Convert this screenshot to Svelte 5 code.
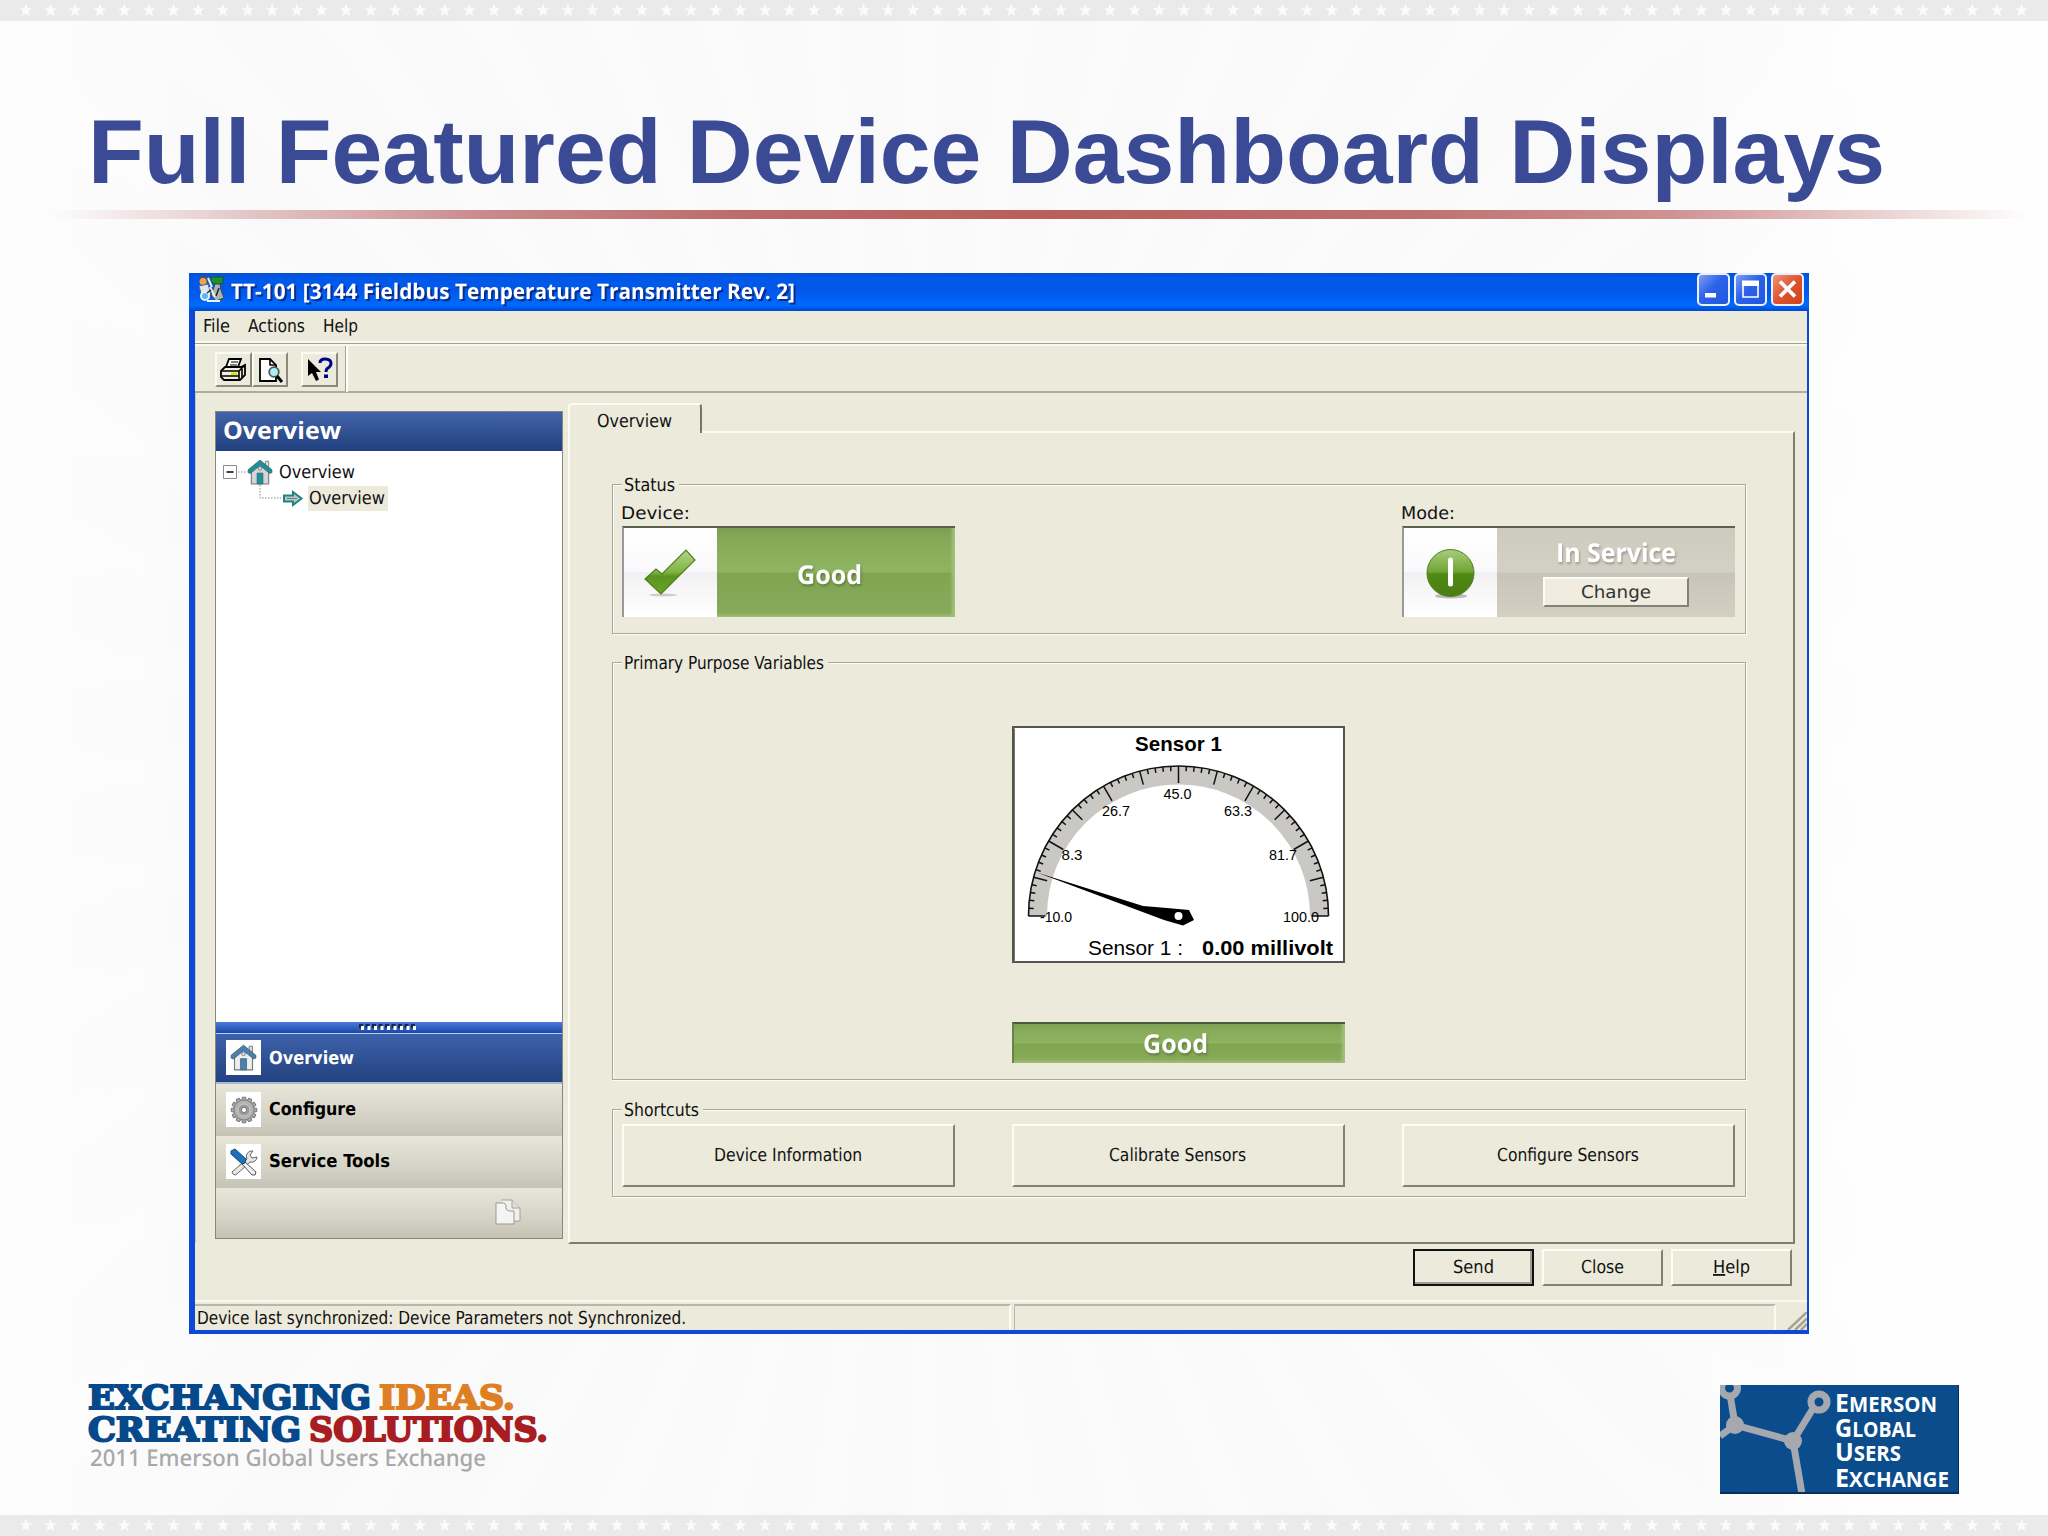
<script lang="ts">
  type Face = { size: number; cls: string };

  const faces: Record<string, Face> = {
    ui: { size: 18, cls: "ui" },
    bold: { size: 18, cls: "ui strong" },
    wide: { size: 17.5, cls: "wide" },
    caption: { size: 21.5, cls: "caption" },
    head: { size: 24, cls: "head" },
    state: { size: 26, cls: "state" },
    slide: { size: 91, cls: "slide-title" },
    slab: { size: 33, cls: "slab" },
    event: { size: 23, cls: "event" },
  };

  const stars = Array.from({ length: 82 }, (_, i) => 25.8 + i * 24.64);

  const menu = [
    { text: "File", width: 27 },
    { text: "Actions", width: 57 },
    { text: "Help", width: 35 },
  ];

  const shortcuts = [
    { text: "Device Information", width: 148 },
    { text: "Calibrate Sensors", width: 137 },
    { text: "Configure Sensors", width: 142 },
  ];

  // gauge geometry
  const cx = 166.5;
  const cy = 190;
  const outer = 150;

  const ticks = Array.from({ length: 61 }, (_, i) => {
    const a = Math.PI - (i * Math.PI) / 60;
    const len = i % 10 === 0 ? 17 : i % 5 === 0 ? 14 : 5;
    return {
      x1: cx + outer * Math.cos(a),
      y1: cy - outer * Math.sin(a),
      x2: cx + (outer - len) * Math.cos(a),
      y2: cy - (outer - len) * Math.sin(a),
    };
  });

  const scale = [
    { text: "-10.0", x: 28, y: 195.5, width: 32 },
    { text: "8.3", x: 49.5, y: 134, width: 21 },
    { text: "26.7", x: 90, y: 89.5, width: 28 },
    { text: "45.0", x: 151.5, y: 73, width: 28 },
    { text: "63.3", x: 212, y: 89.5, width: 28 },
    { text: "81.7", x: 257, y: 134, width: 28 },
    { text: "100.0", x: 271, y: 195.5, width: 36 },
  ];

  const teeth = Array.from({ length: 12 }, (_, i) => i * 30);
</script>

{#snippet label(text: string, width: number, face = "ui")}
  <svg class="label {faces[face].cls}" {width} height={Math.round(faces[face].size * 1.34)}>
    <text x="0" y={faces[face].size} font-size={faces[face].size} textLength={width} lengthAdjust="spacingAndGlyphs">{text}</text>
  </svg>
{/snippet}

{#snippet starBand()}
  <svg class="band" width="2048" height="21" viewBox="0 0 2048 21">
    {#each stars as x}
      <path transform="translate({x} 10.5)" d="M0-7 1.7-2.2 6.4-2.1 2.6 .8 4 5.8 0 3-4 5.8-2.6 .8-6.4-2.1-1.7-2.2Z" fill="#fbfbfb" />
    {/each}
  </svg>
{/snippet}

{#snippet house(size: number, roof: string, wall: string)}
  <svg width={size} height={size} viewBox="0 0 24 24">
    <path d="M17 2h3v7h-3z" fill="#ddd" stroke="#777" stroke-width=".8" />
    <path d="M4 11 12 4l8 7v12H4z" fill={wall} stroke="#777" />
    <path d="M1 12.5V10L12 1l11 9v2.5l-2 .8L12 6 3 13.300z" fill={roof} stroke="#35606e" stroke-width=".7" />
    <path d="M9.300 13h5.400v10H9.300z" fill={roof} stroke="#35606e" stroke-width=".6" />
    <circle cx="12" cy="8.700" r="1.600" fill="#dfe9f2" stroke="#456" stroke-width=".6" />
  </svg>
{/snippet}

<div class="slide">
  {@render starBand()}
  <header>
    {@render label("Full Featured Device Dashboard Displays", 1797, "slide")}
  </header>
  <div class="rule"></div>

  <main class="window">
    <div class="titlebar">
      <svg width="27" height="27" viewBox="0 0 27 27">
        <path d="M2 1h7v7H2z" fill="#7a4a20" /><circle cx="5" cy="5.500" r="3.500" fill="#f2a24c" />
        <path d="M1 10 10 8 13 18 4 21z" fill="#d9e6ee" stroke="#4a6b7c" />
        <path d="M13 1h12v6l-6 2-6-3z" fill="#1f8f30" stroke="#0e5a20" />
        <path d="M17 8h5l1 6 3 8-8 3-5-6z" fill="#a9b5b2" stroke="#39454a" />
        <circle cx="7" cy="20" r="4" fill="#58b8f0" stroke="#e8f3f8" stroke-width="2" />
        <path d="M9 25h13M12 11l5 10M10 2l4 9" stroke="#eef2f3" stroke-width="2" />
        <path d="m21 12-3 8M13 14l-4 3" stroke="#222" stroke-width="1.500" />
      </svg>
      {@render label("TT-101 [3144 Fieldbus Temperature Transmitter Rev. 2]", 564, "caption")}
      <div class="controls">
        <span><svg width="29" height="29"><path d="M6 18h11v4.500H6z" fill="#fff" /></svg></span>
        <span><svg width="29" height="29"><path d="M7 7h15v15H7z" fill="none" stroke="#fff" stroke-width="1.600" /><path d="M6 5.500h17V11H6z" fill="#fff" /></svg></span>
        <span class="x"><svg width="29" height="29"><path d="m7 6.500 15 15M22 6.500l-15 15" stroke="#fff" stroke-width="3.800" /></svg></span>
      </div>
    </div>

    <nav class="menu">
      {#each menu as item}
        {@render label(item.text, item.width)}
      {/each}
    </nav>

    <div class="toolbar">
      <button class="tool" aria-label="Print">
        <svg width="28" height="28" viewBox="0 0 28 28">
          <path d="M7 11 10 3h12l-3 8" fill="#fff" stroke="#000" stroke-width="1.800" />
          <path d="M12 6h7M11 9h7" stroke="#000" stroke-width="1.200" />
          <path d="M2 15 6 11h16l4-2v10l-5 5H5l-3-3z" fill="#efeee2" stroke="#000" stroke-width="1.800" />
          <path d="M2 15h18l6-6M20 15v9M3 20h17M23 13v8" fill="none" stroke="#000" stroke-width="1.600" />
          <path d="M12 16.500h6v2.500h-6z" fill="#e4e000" />
        </svg>
      </button>
      <button class="tool" aria-label="Preview">
        <svg width="28" height="28" viewBox="0 0 28 28">
          <path d="M4 3h10l6 6v16H4z" fill="#fff" stroke="#000" stroke-width="1.800" />
          <path d="M14 3v6h6" fill="none" stroke="#000" stroke-width="1.600" />
          <circle cx="18" cy="16" r="4.800" fill="#a8f0f4" stroke="#555" stroke-width="1.800" />
          <path d="m21 20 5 6" stroke="#000" stroke-width="3" />
        </svg>
      </button>
      <button class="tool apart" aria-label="Context help">
        <svg width="28" height="28" viewBox="0 0 28 28">
          <path d="M3 3v17l4-3 4 8 3-1.500-3-7.500h5z" fill="#000" />
          <path d="M15 7q0-4 5-4 6 0 6 4.500 0 2.500-3 4.500-2 1-2 4" fill="none" stroke="#00008b" stroke-width="3" />
          <path d="M19 18.500h4v3.500h-4z" fill="#00008b" />
        </svg>
      </button>
      <i class="bar"></i>
    </div>

    <div class="body">
      <aside>
        <div class="side-head">{@render label("Overview", 118, "head")}</div>
        <div class="tree">
          <div class="row">
            <svg width="24" height="14"><path d="M.5.5h13v13H.5z" fill="#fff" stroke="#8c8c8c" /><path d="M3.500 7h7" stroke="#000" stroke-width="1.500" /><path d="M15 7h9" stroke="#888" stroke-dasharray="1.500 1.500" /></svg>
            {@render house(26, "#1f9093", "#d5d5d5")}
            {@render label("Overview", 76)}
          </div>
          <div class="row child">
            <svg width="45" height="26" viewBox="0 0 45 26">
              <path d="M1 0v13h21" fill="none" stroke="#888" stroke-dasharray="1.500 1.500" />
              <path d="M25 10.500h9V7l8.500 6.500L34 20v-3.500h-9z" fill="#b9c8c6" stroke="#1c8583" stroke-width="2" />
              <path d="M28 13.500h10" stroke="#777" />
            </svg>
            <span class="selected">{@render label("Overview", 76)}</span>
          </div>
        </div>
        <div class="splitter">
          <svg width="60" height="7">
            {#each { length: 9 } as _, i}
              <path d="M{i * 6.5} 0h4v4h-4z" fill="#15264f" /><path d="M{i * 6.5 + 2} 2h3v4h-3z" fill="#fff" />
            {/each}
          </svg>
        </div>
        <div class="nav active">
          <span class="tile">{@render house(27, "#4a7fb0", "#eceef0")}</span>
          {@render label("Overview", 85, "bold")}
        </div>
        <div class="nav">
          <span class="tile">
            <svg width="28" height="28" viewBox="-14 -14 28 28">
              {#each teeth as angle}
                <path transform="rotate({angle})" d="M-2.300-9-1.700-12.800h3.400L2.300-9z" fill="#aaa" stroke="#666" stroke-width=".8" />
              {/each}
              <circle r="10" fill="#b3b3b3" stroke="#777" stroke-width=".8" />
              <circle r="6" fill="#999" stroke="#ccc" />
              <circle r="2.600" fill="#fff" stroke="#777" />
            </svg>
          </span>
          {@render label("Configure", 87, "bold")}
        </div>
        <div class="nav">
          <span class="tile">
            <svg width="28" height="28" viewBox="0 0 28 28">
              <path d="M2 24 17 11a5.500 5.500 0 0 1 6-8l-3 4 2 3 5-1a5.500 5.500 0 0 1-7 5L7 26a3 3 0 0 1-5-2z" fill="#e6e6e6" stroke="#666" />
              <path d="m12 16 3-2 11 10-1 3h-3z" fill="#eee" stroke="#555" />
              <path d="m1 3 4-2 11 10-1 4-3 1L1 6z" fill="#1f6fbd" stroke="#134a80" />
            </svg>
          </span>
          {@render label("Service Tools", 121, "bold")}
        </div>
        <div class="nav foot">
          <svg width="28" height="28" viewBox="0 0 28 28">
            <path d="M7 2h11l8 8v13H12" fill="#efefec" stroke="#a5a49a" />
            <path d="M18 2v8h8" fill="#ddd" stroke="#a5a49a" />
            <path d="M2 5h8l2 2v4l3 2h5v13H2z" fill="#f4f4f2" stroke="#9b9a90" />
          </svg>
        </div>
      </aside>

      <section class="tabs">
        <div class="tab">{@render label("Overview", 75)}</div>
        <div class="panel">
          <div class="group status">
            <div class="legend">{@render label("Status", 51)}</div>
            <div class="split">
              <div>
                {@render label("Device:", 69, "wide")}
                <div class="indicator">
                  <span class="face">
                    <svg width="56" height="52" viewBox="0 0 56 52">
                      <defs><linearGradient id="check" x1="0" y1="0" x2="0" y2="1"><stop offset="0" stop-color="#b3d587" /><stop offset=".5" stop-color="#7fb443" /><stop offset=".6" stop-color="#5c9420" /><stop offset="1" stop-color="#6aa528" /></linearGradient></defs>
                      <ellipse cx="20" cy="48" rx="14" ry="1.500" fill="#ccc" />
                      <path d="m2 32 11-10 6 5L43 3l9 10-34 34z" fill="url(#check)" stroke="#4f8020" stroke-width="1.200" />
                    </svg>
                  </span>
                  <div class="value good">{@render label("Good", 65, "state")}</div>
                </div>
              </div>
              <div>
                {@render label("Mode:", 54, "wide")}
                <div class="indicator">
                  <span class="face">
                    <svg width="50" height="52" viewBox="0 0 50 52">
                      <defs><linearGradient id="ball" x1="0" y1="0" x2="0" y2="1"><stop offset="0" stop-color="#a9cd7c" /><stop offset=".48" stop-color="#6fa534" /><stop offset=".52" stop-color="#4f8a14" /><stop offset="1" stop-color="#4b7d15" /></linearGradient></defs>
                      <ellipse cx="25" cy="49" rx="16" ry="2.500" fill="#bbb" />
                      <circle cx="24.500" cy="26" r="23.500" fill="url(#ball)" stroke="#4f7f1d" />
                      <path d="M24.500 13v24" stroke="#fff" stroke-width="5" stroke-linecap="round" />
                    </svg>
                  </span>
                  <div class="value mode">
                    {@render label("In Service", 120, "state")}
                    <button class="raised change">{@render label("Change", 70, "wide")}</button>
                  </div>
                </div>
              </div>
            </div>
          </div>

          <div class="group variables">
            <div class="legend">{@render label("Primary Purpose Variables", 200)}</div>
            <svg class="gauge" width="333" height="237" viewBox="0 0 333 237">
              <path d="M1 1h331v235H1z" fill="#fff" stroke="#55554f" stroke-width="2" />
              <path d="M2.500 236V2.500" stroke="#77776f" />
              <path d="M26 190a140.500 140.500 0 0 1 281 0" fill="none" stroke="#c9c8c5" stroke-width="18" />
              <path d="M16.500 190a150 150 0 0 1 300 0" fill="none" stroke="#111" stroke-width="1.600" />
              {#each ticks as t}
                <line {...t} stroke="#111" stroke-width="1.500" />
              {/each}
              <path d="M25 146.500 131 180 155 182 177 184 182 194 171 199.500 152 194Z" fill="#000" />
              <circle cx="166.500" cy="190" r="4" fill="#fff" />
              <g class="scale" font-size="15.500">
                {#each scale as s}
                  <text x={s.x} y={s.y} textLength={s.width} lengthAdjust="spacingAndGlyphs">{s.text}</text>
                {/each}
              </g>
              <text x="123" y="25" font-size="20.500" font-weight="bold" textLength="87" lengthAdjust="spacing">Sensor 1</text>
              <text x="76" y="229" font-size="21" textLength="95" lengthAdjust="spacingAndGlyphs">Sensor 1 :</text>
              <text x="190" y="229" font-size="21" font-weight="bold" textLength="131" lengthAdjust="spacingAndGlyphs">0.00 millivolt</text>
            </svg>
            <div class="value good result">{@render label("Good", 65, "state")}</div>
          </div>

          <div class="group shortcuts">
            <div class="legend">{@render label("Shortcuts", 75)}</div>
            <div class="split">
              {#each shortcuts as s}
                <button class="raised shortcut">{@render label(s.text, s.width)}</button>
              {/each}
            </div>
          </div>
        </div>
      </section>
    </div>

    <div class="actions">
      <button class="raised default">{@render label("Send", 41)}</button>
      <button class="raised">{@render label("Close", 43)}</button>
      <button class="raised">
        <svg class="label ui" width="37" height="24">
          <text x="0" y="18" font-size="18" textLength="37" lengthAdjust="spacingAndGlyphs"><tspan text-decoration="underline">H</tspan>elp</text>
        </svg>
      </button>
    </div>

    <footer class="statusbar">
      <div class="pane first">{@render label("Device last synchronized: Device Parameters not Synchronized.", 489)}</div>
      <div class="pane second"></div>
      <svg width="20" height="18"><path d="M1 18 20 0M8 18 20 6.500M14 18l6-6" stroke="#a5a391" stroke-width="2.500" /></svg>
    </footer>
  </main>

  <footer class="branding">
    <div class="slogan">
      <div class="line blue">{@render label("EXCHANGING", 283, "slab")}<span class="orange">{@render label("IDEAS.", 136, "slab")}</span></div>
      <div class="line blue">{@render label("CREATING", 213, "slab")}<span class="red">{@render label("SOLUTIONS.", 239, "slab")}</span></div>
      {@render label("2011 Emerson Global Users Exchange", 396, "event")}
    </div>
    <svg class="logo" width="239" height="109" viewBox="0 0 239 109">
      <path d="M0 0h239v109H0z" fill="#0b4d8c" />
      <g fill="none" stroke="#a5a8ae" stroke-width="7">
        <path d="M10 9 15 40 73 56 97 17M15 40 0 51M73 56l9 53" />
        <circle cx="9.500" cy="3" r="8" /><circle cx="99" cy="17" r="8" fill="#0b4d8c" />
      </g>
      <circle cx="15" cy="40" r="9" fill="#a5a8ae" /><circle cx="73" cy="56" r="9" fill="#a5a8ae" />
      <path d="M0 108h239V0" fill="none" stroke="#0a2e57" stroke-width="2" />
      <g class="logo-text" font-size="20.500" fill="#fff">
        <text x="115" y="26.500" textLength="102" lengthAdjust="spacingAndGlyphs"><tspan font-size="25">E</tspan>MERSON</text>
        <text x="115" y="51.500" textLength="81" lengthAdjust="spacingAndGlyphs"><tspan font-size="25">G</tspan>LOBAL</text>
        <text x="115" y="76" textLength="66" lengthAdjust="spacingAndGlyphs"><tspan font-size="25">U</tspan>SERS</text>
        <text x="115" y="102" textLength="114" lengthAdjust="spacingAndGlyphs"><tspan font-size="25">E</tspan>XCHANGE</text>
      </g>
    </svg>
  </footer>
  {@render starBand()}
</div>

<style>
  :global(body) {
    margin: 0;
  }

  .slide,
  .slide * {
    box-sizing: border-box;
  }

  .slide {
    display: flex;
    flex-direction: column;
    width: 2048px;
    height: 1536px;
    overflow: hidden;
    background:
      linear-gradient(90deg, #fdfdfe 0, transparent 12%, transparent 80%, #fefefe 92%),
      repeating-conic-gradient(from 2deg at 45% 50%, #f9f9fa 0deg 3deg, #fbfbfc 4.5deg 6deg, #f9f9fa 7.5deg);
  }

  svg {
    display: block;
    flex: none;
  }

  button {
    font: inherit;
    padding: 0;
    margin: 0;
  }

  .band {
    background: #eaeaeb;
  }

  .label {
    overflow: visible;
    fill: currentColor;
    text-rendering: geometricPrecision;
  }

  .ui {
    font-family: "DejaVu Sans Condensed", "DejaVu Sans", sans-serif;
  }

  .strong {
    font-weight: bold;
  }

  .wide {
    font-family: "DejaVu Sans", sans-serif;
  }

  .head,
  .caption,
  .state,
  .logo-text {
    font-family: "Open Sans", "Noto Sans", sans-serif;
    font-weight: bold;
  }

  .state {
    filter: drop-shadow(1px 2px 1px rgb(0 0 0 / 25%));
  }

  .slide-title {
    font-family: "Liberation Sans", Arial, sans-serif;
    font-weight: bold;
  }

  .slab {
    font-family: "DejaVu Serif", serif;
    font-weight: bold;
    stroke: currentColor;
    stroke-width: 2;
  }

  .event {
    font-family: "Noto Sans", sans-serif;
    font-weight: 500;
  }

  header {
    height: 189px;
    padding: 71px 0 0 88px;
    color: #3b4a94;
  }

  .rule {
    flex: none;
    height: 9px;
    margin: 0 20px 0 50px;
    background: linear-gradient(90deg, transparent, #c98a8b 22%, #bc6c6a 35%, #b95f5c 50%, #bd6f6d 68%, #cf9292 82%, transparent);
  }

  .window {
    display: flex;
    flex: none;
    flex-direction: column;
    width: 1620px;
    height: 1061px;
    margin: 54px 0 0 189px;
    background: #ebeadb;
    border: solid #0f48d8;
    border-width: 0 2px 4px 6px;
    color: #111;
  }

  .titlebar {
    display: flex;
    flex: none;
    height: 38px;
    margin: 0 -2px 0 -6px;
    padding: 3px 5px 0 9px;
    background: linear-gradient(#0a4fd0, #0058e8 12%, #0059ea 50%, #006aff 85%, #0048cd);
    color: #fff;
  }

  .titlebar .label {
    margin: 1px 0 0 6px;
    filter: drop-shadow(2px 2px 0 #0a2c8c);
  }

  .controls {
    display: flex;
    gap: 4px;
    margin: -3px 0 0 auto;
  }

  .controls span {
    width: 33px;
    height: 33px;
    border: 2px solid #e9f1ff;
    border-radius: 5px;
    background: linear-gradient(135deg, #7d9df0, #2c62ea 45%, #2158dd);
  }

  .controls .x {
    background: linear-gradient(135deg, #ee9576, #dd5430 50%, #cb4418);
  }

  .menu {
    display: flex;
    flex: none;
    gap: 18px;
    height: 32px;
    padding: 3px 0 0 8px;
    border-bottom: 2px solid #f9f9f2;
  }

  .toolbar {
    display: flex;
    flex: none;
    height: 50px;
    padding: 8px 0 0 20px;
    border-top: 1px solid #a3a190;
    border-bottom: 2px solid #aeac9c;
    box-shadow: inset 0 2px 0 #f9f9f2;
  }

  .tool {
    display: grid;
    width: 36.5px;
    height: 35px;
    place-items: center;
    background: #ebeadb;
    border: 2px solid;
    border-color: #fbfbf4 #8b897a #8b897a #fbfbf4;
  }

  .apart {
    margin-left: 13px;
  }

  .bar {
    width: 3px;
    height: 46px;
    margin: -6px 0 0 7px;
    background: #a3a190;
    border-right: 2px solid #fff;
  }

  .body {
    display: flex;
    flex: none;
    height: 850px;
    border-left: 1px solid #c9c8ba;
  }

  aside {
    display: flex;
    flex: none;
    flex-direction: column;
    width: 348px;
    height: 828px;
    margin: 18px 0 0 19px;
    border: 1px solid #89877b;
  }

  .side-head {
    height: 39px;
    padding: 3px 0 0 7px;
    background: linear-gradient(#4263aa, #20407e);
    color: #fff;
  }

  .tree {
    flex: 1;
    padding: 8px 0 0 7px;
    background: #fff;
  }

  .row {
    display: flex;
    align-items: center;
    height: 26px;
  }

  .row .label {
    margin: -1px 0 0 6px;
  }

  .child {
    padding-left: 36px;
  }

  .selected {
    width: 80px;
    height: 25px;
    margin-left: 4px;
    background: #ebeadb;
  }

  .selected .label {
    margin: 0 0 0 1px;
  }

  .splitter {
    display: flex;
    flex: none;
    justify-content: center;
    height: 12px;
    padding-top: 2px;
    background: linear-gradient(#4a7bd8, #1c47a8);
    border-bottom: 1px solid #b9d0f5;
  }

  .nav {
    display: flex;
    flex: none;
    height: 52px;
    padding: 8px 0 0 10px;
    background: linear-gradient(#e8e6d8, #d5d3c6 60%, #c5c3b5);
    color: #000;
  }

  .nav .label {
    margin: 5px 0 0 8px;
  }

  .active {
    height: 50px;
    padding-top: 6px;
    background: linear-gradient(#3d61ab, #23427f);
    border-bottom: 2px solid #a9b9d8;
    color: #fff;
  }

  .active .label {
    margin-top: 6px;
  }

  .tile {
    display: grid;
    width: 35px;
    height: 35px;
    place-items: center;
    background: #fff;
  }

  .foot {
    height: 50px;
    padding: 10px 0 0 278px;
  }

  .tabs {
    width: 1227px;
    margin: 10px 0 0 5px;
  }

  .tab {
    position: relative;
    width: 134px;
    height: 30px;
    padding: 4px 0 0 27px;
    background: #ebeadb;
    border: solid #fbfbf4;
    border-width: 2px 2px 0;
    border-right-color: #77756a;
    border-radius: 4px 4px 0 0;
  }

  .panel {
    height: 813px;
    margin-top: -2px;
    padding: 51px 47px 0 42px;
    border: 2px solid;
    border-color: #fbfbf4 #7f7d70 #7f7d70 #fbfbf4;
  }

  .group {
    border: 1px solid #aaa899;
    box-shadow:
      inset 1px 1px 0 #fdfdf6,
      1px 1px 0 #fdfdf6;
    padding: 0 10px 0 9px;
  }

  .legend {
    width: max-content;
    margin-top: -12px;
    padding: 0 4px 0 2px;
    background: #ebeadb;
  }

  .split {
    display: flex;
    justify-content: space-between;
  }

  .status {
    height: 150px;
    margin-bottom: 28px;
  }

  .status .split {
    padding-top: 4px;
  }

  .status .wide {
    margin-left: -1px;
  }

  .variables {
    display: flex;
    flex-direction: column;
    height: 418px;
    margin-bottom: 29px;
  }

  .shortcuts {
    height: 88px;
  }

  .indicator {
    display: flex;
    width: 333px;
    height: 91px;
    margin-top: 2px;
    border-top: 2px solid #5b6350;
    border-left: 2px solid #999;
  }

  .face {
    display: grid;
    width: 93px;
    place-items: center;
    background: linear-gradient(#fff, #faf9fb 49%, #f1f1f3 50%, #fff);
  }

  .value {
    display: flex;
    flex: 1;
    flex-direction: column;
    align-items: center;
    color: #fff;
  }

  .good {
    padding: 30px 13px 0 0;
    background: linear-gradient(#7b9f52, #86a957 12%, #8fb562 49%, #80a550 51%, #88ab5c);
    box-shadow: inset -3px -2px 3px #a3c07e;
  }

  .mode {
    padding: 8px 0 0;
    background: linear-gradient(#cccbbd, #d3d1c5 49%, #c9c4b9 51%, #d4cfc3);
  }

  .raised {
    display: grid;
    width: 121px;
    height: 37px;
    place-items: center;
    background: #ebeadb;
    border: 2px solid;
    border-color: #fdfdf6 #838174 #838174 #fdfdf6;
    color: #111;
  }

  .change {
    width: 146px;
    height: 30px;
    margin-top: 6px;
    background: #f0ecdf;
    color: #333;
  }

  .change .label {
    margin: -2px 0 0;
  }

  .gauge {
    align-self: center;
    margin-top: 51px;
    font-family: "Liberation Sans", Arial, sans-serif;
  }

  .result {
    flex: none;
    align-self: center;
    width: 333px;
    height: 41px;
    margin-top: 59px;
    padding: 3px 9px 0 0;
    border-top: 2px solid #4c5c3a;
    border-left: 2px solid #6a8348;
  }

  .shortcut {
    width: 333px;
    height: 63px;
    margin-top: 2px;
  }

  .shortcut .label {
    margin: -2px 2px 0 0;
  }

  .actions {
    display: flex;
    flex: none;
    justify-content: flex-end;
    gap: 8px;
    height: 57px;
    padding: 6px 15px 0 0;
  }

  .actions .label {
    margin-top: -1px;
  }

  .default {
    border-color: #fdfdf6 #a09e90 #a09e90 #fdfdf6;
    outline: 2px solid #111;
    outline-offset: -2px;
    box-shadow: inset -2px -2px 0 #a09e90;
  }

  .statusbar {
    display: flex;
    flex: 1;
    align-items: flex-end;
    border-top: 2px solid #f9f9f2;
  }

  .pane {
    height: 26px;
    border-top: 2px solid #b9b7a8;
    border-right: 2px solid #fbfbf4;
  }

  .first {
    width: 817px;
    padding-left: 2px;
  }

  .second {
    width: 762px;
    margin: 0 11px 0 3px;
    border-left: 1px solid #b9b7a8;
  }

  .branding {
    display: flex;
    justify-content: space-between;
    height: 181px;
    padding: 51px 89px 0 88px;
  }

  .line {
    display: flex;
    gap: 8px;
    height: 32px;
    margin-top: -9px;
    margin-bottom: 9px;
  }

  .blue {
    color: #06498a;
  }

  .orange {
    color: #de7f24;
  }

  .red {
    color: #a81d21;
  }

  .event {
    margin: -6px 0 0 2px;
    color: #a8a8a8;
  }
</style>
